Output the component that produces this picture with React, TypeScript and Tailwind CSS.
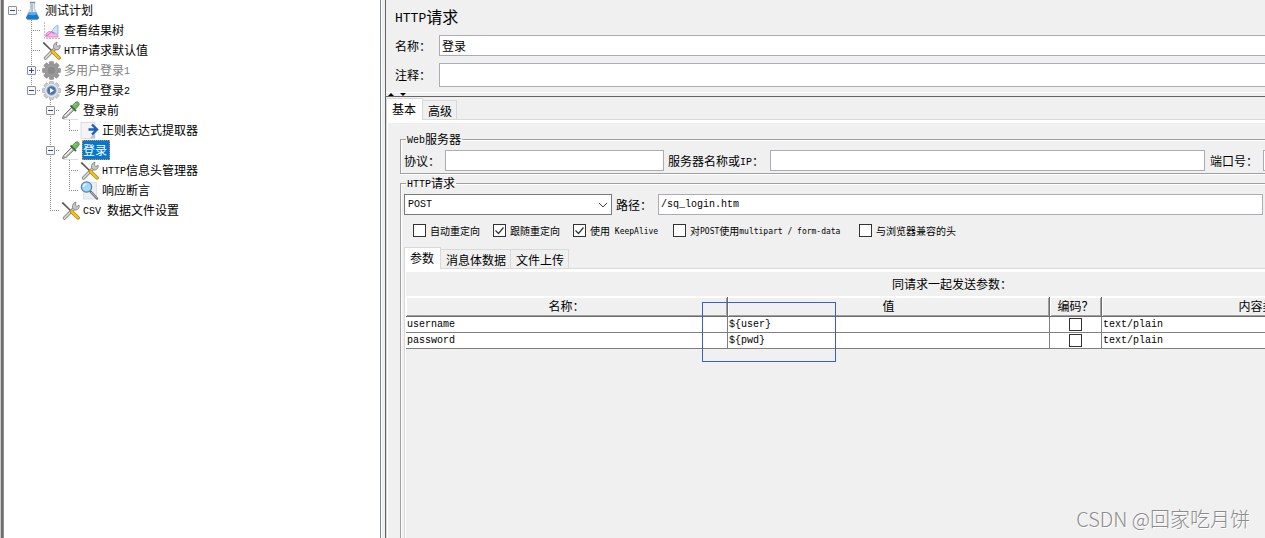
import { useState, type ReactNode } from "react";

const MONO = "font-['Liberation_Mono','Noto_Sans_CJK_SC',monospace]";
const MONO_SMALL = "font-['DejaVu_Sans_Mono','Noto_Sans_CJK_SC',monospace] text-[8px]";

/* Chinese text with its Latin runs set in the narrow monospace face. */
function Txt({ children, latin = `${MONO} text-[10px]` }: { children: string; latin?: string }) {
  return (
    <>
      {children.split(/([\x20-\x7e]+)/).map((part, i) =>
        i % 2 ? (
          <span key={i} className={`${latin} align-[1px] leading-none whitespace-pre`}>
            {part}
          </span>
        ) : (
          part
        ),
      )}
    </>
  );
}

function Svg({ children }: { children: ReactNode }) {
  return (
    <svg viewBox="0 0 19 19" className="h-[19px] w-[19px] shrink-0" aria-hidden="true">
      {children}
    </svg>
  );
}

function FlaskIcon() {
  return (
    <Svg>
      <path d="M7.500 1.500h4v6l4 8.500q.6 2.500-1.500 2.500H5q-2.200 0-1.500-2.500l4-8.500z" fill="#dfeaf3" stroke="#a9bac8" strokeWidth=".8" />
      <path d="M5.800 11.500h7.400l2.500 4.700q.3 2.300-1.700 2.300H5q-2 0-1.700-2.300z" fill="#1b78d0" />
      <path d="M5.800 11.500h7.400l.9 1.800q-4.600 1.700-9.200 0z" fill="#5badf0" />
      <path d="M6.800 1.500h5.400" stroke="#7f8c98" strokeWidth="1.400" />
      <path d="M9 3v8" stroke="#93a7b8" strokeWidth="1.200" />
    </Svg>
  );
}

function ChartIcon() {
  return (
    <Svg>
      <path d="M4 16v-3q3-4 5-2 2 2 4 0l3 3.500v1.500z" fill="#fbb4ec" stroke="#e07cc8" strokeWidth=".9" />
      <path d="M9 11q1.500-1 3-4 1.500-2.500 4-2.500v8.500q-2 .5-3-1-2-1-4-1z" fill="#cfe4fb" stroke="#8aaede" strokeWidth=".9" />
      <path d="M3.500 15q4-1 6-4.500l3 2.500" fill="none" stroke="#cf6aa8" strokeWidth=".9" />
      <path d="M2.500 1v16.500H18" fill="none" stroke="#cbb6bd" strokeWidth="1" strokeDasharray="2 1" />
    </Svg>
  );
}

function ToolsIcon() {
  return (
    <Svg>
      <path d="M3.500 17L13 7.500" stroke="#777" strokeWidth="3.200" strokeLinecap="round" />
      <path d="M3.500 17L13 7.500" stroke="#d6d6d6" strokeWidth="1.800" strokeLinecap="round" />
      <path d="M11.500 6.500q-.5-4 3.500-5.500l-.7 3 1.700 1.500L18 4q1 4-3 5-2 .5-3.500-2.500z" fill="#c6c6c6" stroke="#777" strokeWidth=".8" />
      <path d="M.5 2l1.500-1 8.500 8.500-1 1z" fill="#555" />
      <path d="M10.500 10.500l6.500 6.300" stroke="#a97a08" strokeWidth="3.600" strokeLinecap="round" />
      <path d="M10.500 10.300l6.300 6.300" stroke="#f2c21c" strokeWidth="2.400" strokeLinecap="round" />
    </Svg>
  );
}

function GearIcon({ disabled = false }: { disabled?: boolean }) {
  const body = disabled ? "#979797" : "#c9cdd2";
  return (
    <Svg>
      {[0, 45, 90, 135].map((a) => (
        <rect key={a} x="7.300" y=".4" width="4.400" height="18.200" rx="1" fill={body} stroke={disabled ? "#8c8c8c" : "#9aa1a8"} strokeWidth=".6" transform={`rotate(${a} 9.500 9.500)`} />
      ))}
      <circle cx="9.500" cy="9.500" r="7" fill={body} />
      {disabled ? (
        <circle cx="9.500" cy="9.500" r="4.500" fill="#8a8a8a" stroke="#a5a5a5" />
      ) : (
        <>
          <circle cx="9.500" cy="9.500" r="6.400" fill="#e6e9ec" />
          <circle cx="9.500" cy="9.500" r="4.600" fill="#4474b4" stroke="#8fa1b6" strokeWidth="1" />
          <path d="M8 7l4 2.500L8 12z" fill="#fff" />
        </>
      )}
    </Svg>
  );
}

function DropperIcon() {
  return (
    <Svg>
      <path d="M2 18.500h15" stroke="#ddd" strokeWidth="1" />
      <path d="M1.500 17.500l1-3 8.500-8.500 2.500 2.500-8.500 8z" fill="#c5cbc5" stroke="#666" strokeWidth=".9" />
      <path d="M4 15l7-7" stroke="#fff" strokeWidth="1" />
      <path d="M9.500 4.500l5.500 5.500" stroke="#3d6b40" strokeWidth="1.800" />
      <path d="M11 5l3-3.300q2.200-1.700 3.600-.2t-.2 3.600L14.200 8.200z" fill="#6fb55c" stroke="#4b8a45" strokeWidth=".9" />
      <path d="M13 4.500l2-2" stroke="#b5dfa8" strokeWidth="1" />
    </Svg>
  );
}

function ExtractIcon() {
  return (
    <Svg>
      <rect x="1" y="1.500" width="14" height="16" fill="#f2f4f6" stroke="#d3d7da" strokeWidth=".8" />
      <path d="M10 17l5-6v6.500z" fill="#bfc5c9" />
      <path d="M8.500 8.500h8M12 3.500l5 5-5 5" fill="none" stroke="#1c62b8" strokeWidth="2.400" />
    </Svg>
  );
}

function MagnifierIcon() {
  return (
    <Svg>
      <rect x="3.500" y="1.500" width="13" height="16.500" fill="#eceef0" stroke="#d5d8da" strokeWidth=".7" />
      <path d="M10.500 10.500l6.500 7" stroke="#667" strokeWidth="2.400" strokeLinecap="round" />
      <path d="M11 11l6 6.300" stroke="#c2c8cc" strokeWidth="1" />
      <circle cx="6.500" cy="6" r="5.200" fill="#a6d5f5" stroke="#4c86b8" strokeWidth="1.200" />
      <path d="M3.500 6q0-3 3-3" fill="none" stroke="#eaf7ff" strokeWidth="1.300" />
    </Svg>
  );
}

/* One indent cell of the tree: dotted guide lines around the cell's axis. */
type Guide = "none" | "root" | "line" | "tee" | "end";

function GuideCell({ kind, toggle }: { kind: Guide; toggle?: "+" | "-" }) {
  return (
    <span className="grid h-5 w-[19px] shrink-0">
      <svg viewBox="0 0 19 20" className="h-5 w-[19px] [grid-area:1/1]" aria-hidden="true">
        <g stroke="#8c8c8c" strokeDasharray="1 1">
          {(kind === "line" || kind === "tee") && <path d="M8.500 0v20" />}
          {kind === "end" && <path d="M8.500 0v10" />}
          {(kind === "tee" || kind === "end" || kind === "root") && <path d="M8 10.500h10" />}
        </g>
      </svg>
      {toggle && (
        <button
          type="button"
          aria-label={toggle === "+" ? "展开" : "折叠"}
          className="ml-1 grid h-[9px] w-[9px] place-items-center self-center rounded-[1px] border border-[#919191] bg-[#f7f7f7] [grid-area:1/1]"
        >
          <svg viewBox="0 0 7 7" className="h-[7px] w-[7px]" stroke="#2b4b9b">
            <path d={toggle === "+" ? "M1 3.500h5M3.500 1v5" : "M1 3.500h5"} />
          </svg>
        </button>
      )}
    </span>
  );
}

type Node = {
  label: string;
  icon: ReactNode;
  guides: Guide[];
  toggle?: "+" | "-";
  muted?: boolean;
  selected?: boolean;
};

const nodes: Node[] = [
  { label: "测试计划", icon: <FlaskIcon />, guides: ["root"], toggle: "-" },
  { label: "查看结果树", icon: <ChartIcon />, guides: ["none", "tee"] },
  { label: "HTTP请求默认值", icon: <ToolsIcon />, guides: ["none", "tee"] },
  { label: "多用户登录1", icon: <GearIcon disabled />, guides: ["none", "tee"], toggle: "+", muted: true },
  { label: "多用户登录2", icon: <GearIcon />, guides: ["none", "end"], toggle: "-" },
  { label: "登录前", icon: <DropperIcon />, guides: ["none", "none", "tee"], toggle: "-" },
  { label: "正则表达式提取器", icon: <ExtractIcon />, guides: ["none", "none", "line", "end"] },
  { label: "登录", icon: <DropperIcon />, guides: ["none", "none", "tee"], toggle: "-", selected: true },
  { label: "HTTP信息头管理器", icon: <ToolsIcon />, guides: ["none", "none", "line", "tee"] },
  { label: "响应断言", icon: <MagnifierIcon />, guides: ["none", "none", "line", "end"] },
  { label: "CSV 数据文件设置", icon: <ToolsIcon />, guides: ["none", "none", "end"] },
];

function Tree() {
  return (
    <ul className="w-[377px] shrink-0 border-l border-[#8e8e8e] bg-white">
      {nodes.map((n) => (
        <li key={n.label} className="flex h-5 items-center">
          {n.guides.map((g, i) => (
            <GuideCell key={i} kind={g} toggle={i === n.guides.length - 1 ? n.toggle : undefined} />
          ))}
          {n.icon}
          <span
            className={
              n.selected
                ? "ml-0.5 border border-dotted border-[#ff8728] bg-[#0078d7] pr-0.5 leading-[18px] text-white"
                : n.muted
                  ? "ml-[3px] text-[#808080]"
                  : "ml-[3px]"
            }
          >
            <Txt>{n.label}</Txt>
          </span>
        </li>
      ))}
    </ul>
  );
}

const FIELD = "min-w-0 rounded-none border border-[#abadb3] bg-white px-0.5 text-black outline-none";

function CheckBox({ id, label, defaultChecked }: { id?: string; label?: string; defaultChecked?: boolean }) {
  const [on, setOn] = useState(!!defaultChecked);
  return (
    <span className="inline-grid h-[13px] w-[13px] shrink-0">
      <input
        id={id}
        aria-label={label}
        type="checkbox"
        checked={on}
        onChange={(e) => setOn(e.target.checked)}
        className="h-[13px] w-[13px] appearance-none border border-[#333] bg-white [grid-area:1/1]"
      />
      {on && (
        <svg viewBox="0 0 13 13" className="pointer-events-none h-[13px] w-[13px] [grid-area:1/1]" fill="none" stroke="#333" strokeWidth="1.200">
          <path d="M2.500 6.500l3 3 5-6" />
        </svg>
      )}
    </span>
  );
}

const options = [
  { id: "auto", label: "自动重定向", on: false, width: "w-[50px]" },
  { id: "follow", label: "跟随重定向", on: true, width: "w-[50px]" },
  { id: "keep", label: "使用 KeepAlive", on: true, width: "w-[70px]" },
  { id: "multi", label: "对POST使用multipart / form-data", on: false, width: "w-[156px]" },
  { id: "compat", label: "与浏览器兼容的头", on: false, width: "w-[80px]" },
];

function Tabs({ items }: { items: string[] }) {
  return (
    <div role="tablist" className="flex h-[21px] items-end">
      {items.map((t, i) => (
        <button
          key={t}
          type="button"
          role="tab"
          aria-selected={i === 0}
          className={
            i === 0
              ? "z-10 -mb-px h-[22px] border border-b-0 border-[#d9d9d9] bg-white pr-[6px] pl-[5px] pb-0.5"
              : "h-[19px] border border-b-0 border-l-0 border-[#d9d9d9] bg-[#f0f0f0] pr-1 pl-[5px] pt-0.5"
          }
        >
          {t}
        </button>
      ))}
    </div>
  );
}

const FIELDSET =
  "min-w-0 border border-r-0 border-[#a0a0a0] pl-[3px] pt-[3px] shadow-[inset_1px_1px_0_#fff,0_1px_0_#fff]";

const rows = [
  { name: "username", value: "${user}", type: "text/plain" },
  { name: "password", value: "${pwd}", type: "text/plain" },
];

const TH = "border-r border-[#6d6d6d] p-0 pb-px font-normal shadow-[inset_1px_1px_0_#fff,inset_-1px_-1px_0_#a0a0a0]";
const TD = `${MONO} border-r border-b border-[#808080] p-0 pl-px text-[10px] leading-[15px]`;

function ParamTable() {
  return (
    <table className="w-[1018px] table-fixed border-separate border-spacing-0">
      <colgroup>
        <col className="w-[322px]" />
        <col className="w-[322px]" />
        <col className="w-[52px]" />
        <col className="w-[322px]" />
      </colgroup>
      <thead>
        <tr className="h-5">
          {["名称：", "值", "编码？", "内容类型"].map((h) => (
            <th key={h} className={`${TH} border-b`}>
              {h}
            </th>
          ))}
        </tr>
      </thead>
      <tbody className="bg-white">
        {rows.map((r) => (
          <tr key={r.name} className="h-4">
            <td className={TD}>{r.name}</td>
            <td className={TD}>{r.value}</td>
            <td className={TD}>
              <span className="flex justify-center pr-0.5">
                <CheckBox label={`编码 ${r.name}`} />
              </span>
            </td>
            <td className={TD}>{r.type}</td>
          </tr>
        ))}
      </tbody>
    </table>
  );
}

export default function App() {
  return (
    <div
      lang="zh-CN"
      className="relative flex min-h-screen overflow-hidden bg-[#f0f0f0] font-['Noto_Sans_CJK_SC',sans-serif] text-[12px] leading-4 text-black"
    >
      <div className="w-[3px] shrink-0 border-l border-[#c8c8c8] bg-[#6f6f6f]" />
      <Tree />
      <div className="w-[5px] shrink-0 border-l border-[#82879a] bg-[#f0f0f0] shadow-[inset_1px_0_0_#fff]" />

      <main className="flex min-w-0 flex-1 flex-col overflow-hidden border-l border-[#646464]">
        <header className="flex flex-col border-b border-white pb-[5px] pl-[9px]">
          <h1 className="mt-1 mb-[7px] h-6 text-[16px] leading-6 font-normal">
            <Txt latin={`${MONO} text-[13px]`}>HTTP请求</Txt>
          </h1>
          <div className="flex items-center">
            <label htmlFor="name" className="w-11 shrink-0">名称：</label>
            <input id="name" defaultValue="登录" className={`${FIELD} -mr-px h-[21px] flex-1`} />
          </div>
          <div className="mt-[7px] flex items-center">
            <label htmlFor="comment" className="w-11 shrink-0">注释：</label>
            <input id="comment" className={`${FIELD} -mr-px h-6 flex-1`} />
          </div>
        </header>

        <div className="flex h-1 shrink-0 items-end gap-1.5 border-b border-[#646464] pl-0.5">
          <svg viewBox="0 0 6 3" className="h-[3px] w-1.5"><path d="M0 3l3-3 3 3z" /></svg>
          <svg viewBox="0 0 6 3" className="h-[3px] w-1.5"><path d="M0 0h6L3 3z" /></svg>
        </div>

        <div className="mt-px flex min-w-0 flex-1 flex-col">
          <Tabs items={["基本", "高级"]} />
          <div className="flex flex-1 flex-col border-t border-l border-[#d9d9d9] bg-white pt-[3px] pl-px">
            <div className="flex flex-1 flex-col bg-[#f0f0f0] pt-2 pl-3">
              <fieldset className={`${FIELDSET} pb-0.5`}>
                <legend className="ml-0.5 h-4 px-px"><Txt>Web服务器</Txt></legend>
                <div className="-mr-14 flex h-[21px] items-center">
                  <label htmlFor="protocol" className="mr-[5px] shrink-0">协议：</label>
                  <input id="protocol" className={`${FIELD} h-[21px] w-[219px]`} />
                  <label htmlFor="server" className="mr-1.5 ml-1 shrink-0"><Txt>服务器名称或IP：</Txt></label>
                  <input id="server" className={`${FIELD} h-[21px] flex-1`} />
                  <label htmlFor="port" className="mx-[5px] shrink-0">端口号：</label>
                  <input id="port" className={`${FIELD} h-[21px] w-[58px] shrink-0`} />
                </div>
              </fieldset>

              <fieldset className={`${FIELDSET} mt-px flex-1 border-b-0`}>
                <legend className="ml-0.5 h-4 px-px"><Txt>HTTP请求</Txt></legend>
                <div className="flex h-[21px] items-center pr-0.5">
                  <span className="grid w-52 shrink-0">
                    <select
                      aria-label="请求方法"
                      defaultValue="POST"
                      className={`${MONO} h-[21px] appearance-none rounded-none border border-[#7a7a7a] bg-white pl-[3px] text-[10px] [grid-area:1/1]`}
                    >
                      <option>POST</option>
                      <option>GET</option>
                    </select>
                    <svg viewBox="0 0 10 6" className="pointer-events-none mr-1 h-1.5 w-2.5 self-center justify-self-end [grid-area:1/1]" fill="none" stroke="#444">
                      <path d="M1 1l4 4 4-4" />
                    </svg>
                  </span>
                  <label htmlFor="path" className="mr-1.5 ml-1 shrink-0">路径：</label>
                  <input id="path" defaultValue="/sq_login.htm" className={`${FIELD} ${MONO} h-[21px] flex-1 text-[10px]`} />
                </div>

                <div className="mt-[9px] flex h-[13px] items-center gap-[13px] pl-[9px] text-[10px]">
                  {options.map((o) => (
                    <span key={o.id} className="flex shrink-0 items-center gap-1">
                      <CheckBox id={o.id} defaultChecked={o.on} />
                      <label htmlFor={o.id} className={`${o.width} h-[14px] leading-[13px] whitespace-nowrap`}>
                        <Txt latin={MONO_SMALL}>{o.label}</Txt>
                      </label>
                    </span>
                  ))}
                </div>

                <div className="mt-2.5">
                  <Tabs items={["参数", "消息体数据", "文件上传"]} />
                  <div className="border-t border-l border-[#d9d9d9] bg-white pt-[3px] pl-px">
                    <div className="relative w-[1092px] bg-[#f0f0f0] pb-[189px]">
                      <p className="border-b border-white py-1 text-center">同请求一起发送参数：</p>
                      <ParamTable />
                      <div className="pointer-events-none absolute top-[30px] left-[296px] h-[60px] w-[134px] border border-[#3a5fcd]" />
                    </div>
                  </div>
                </div>
              </fieldset>
            </div>
          </div>
        </div>
      </main>

      <div className="absolute right-[15px] bottom-1 text-[20px] leading-[30px] font-light text-[#8c8c8c] [text-shadow:1px_1px_0_#fff]">
        CSDN @回家吃月饼
      </div>
    </div>
  );
}
